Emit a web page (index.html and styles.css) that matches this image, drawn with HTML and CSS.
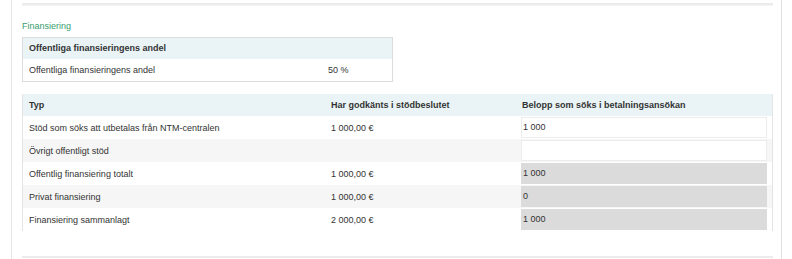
FILE: index.html
```html
<!DOCTYPE html>
<html lang="sv">
<head>
<meta charset="utf-8">
<title>Finansiering</title>
<link rel="stylesheet" href="styles.css">
</head>
<body>
<div class="frame">
  <div class="rule top"></div>
  <h2 class="title">Finansiering</h2>
  <div class="share">
    <div class="share-head">Offentliga finansieringens andel</div>
    <div class="share-row">
      <span>Offentliga finansieringens andel</span>
      <span>50 %</span>
    </div>
  </div>
  <div class="fin">
    <div class="fin-row head">
      <div class="c1">Typ</div>
      <div class="c2">Har godkänts i stödbeslutet</div>
      <div class="c3 htext">Belopp som söks i betalningsansökan</div>
    </div>
    <div class="fin-row">
      <div class="c1">Stöd som söks att utbetalas från NTM-centralen</div>
      <div class="c2">1 000,00 €</div>
      <div class="c3"><div class="field">1 000</div></div>
    </div>
    <div class="fin-row alt">
      <div class="c1">Övrigt offentligt stöd</div>
      <div class="c2"></div>
      <div class="c3"><div class="field"></div></div>
    </div>
    <div class="fin-row">
      <div class="c1">Offentlig finansiering totalt</div>
      <div class="c2">1 000,00 €</div>
      <div class="c3"><div class="field ro">1 000</div></div>
    </div>
    <div class="fin-row alt">
      <div class="c1">Privat finansiering</div>
      <div class="c2">1 000,00 €</div>
      <div class="c3"><div class="field ro">0</div></div>
    </div>
    <div class="fin-row">
      <div class="c1">Finansiering sammanlagt</div>
      <div class="c2">2 000,00 €</div>
      <div class="c3"><div class="field ro">1 000</div></div>
    </div>
  </div>
  <div class="rule bottom"></div>
</div>
</body>
</html>
```

FILE: styles.css
```css
html, body {
  margin: 0;
  padding: 0;
  background: #ffffff;
}
body {
  font-family: "Liberation Sans", Arial, sans-serif;
  font-size: 9px;
  color: #333333;
}
.frame {
  margin-left: 11px;
  width: 771px;
  height: 259px;
  box-sizing: border-box;
  border-left: 1px solid #e6e6e6;
  border-right: 1px solid #e0e0e0;
  padding: 3px 8px 0 10px;
  display: flex;
  flex-direction: column;
}
.rule {
  height: 2px;
  background: #ececec;
  width: 751px;
}
.rule.top {
  border-bottom: 1px solid #f4f4f4;
}
.title {
  margin: 14px 0 0 0;
  font-size: 9px;
  font-weight: normal;
  line-height: 12px;
  color: #3a9d6f;
}
.share {
  margin-top: 5px;
  width: 371px;
  box-sizing: border-box;
  border: 1px solid #dcdcdc;
}
.share-head {
  height: 21px;
  line-height: 21px;
  padding-left: 6px;
  background: #eaf4f7;
  font-weight: bold;
}
.share-row {
  height: 22px;
  display: grid;
  grid-template-columns: 299px 1fr;
  align-items: center;
  padding-left: 6px;
}
.fin {
  margin-top: 12px;
  width: 751px;
  box-sizing: border-box;
  border-left: 1px solid #e4e4e4;
  border-right: 1px solid #e4e4e4;
}
.fin-row {
  display: grid;
  grid-template-columns: 301px 191px 1fr;
  height: 23px;
  align-items: center;
}
.fin-row.head {
  height: 22px;
  background: #eaf4f7;
  font-weight: bold;
}
.fin-row.alt {
  background: #f6f6f6;
}
.c1 {
  padding-left: 6px;
}
.c2 {
  padding-left: 7px;
}
.c3 {
  padding-left: 6px;
}
.c3.htext {
  padding-left: 7px;
}
.field {
  width: 246px;
  height: 21px;
  box-sizing: border-box;
  border: 1px solid #ececec;
  background: #ffffff;
  line-height: 19px;
  padding-left: 1px;
}
.field.ro {
  background: #dbdbdb;
  border-color: #dbdbdb;
}
.rule.bottom {
  margin-top: 25px;
  height: 2px;
  background: #ececec;
}
```
